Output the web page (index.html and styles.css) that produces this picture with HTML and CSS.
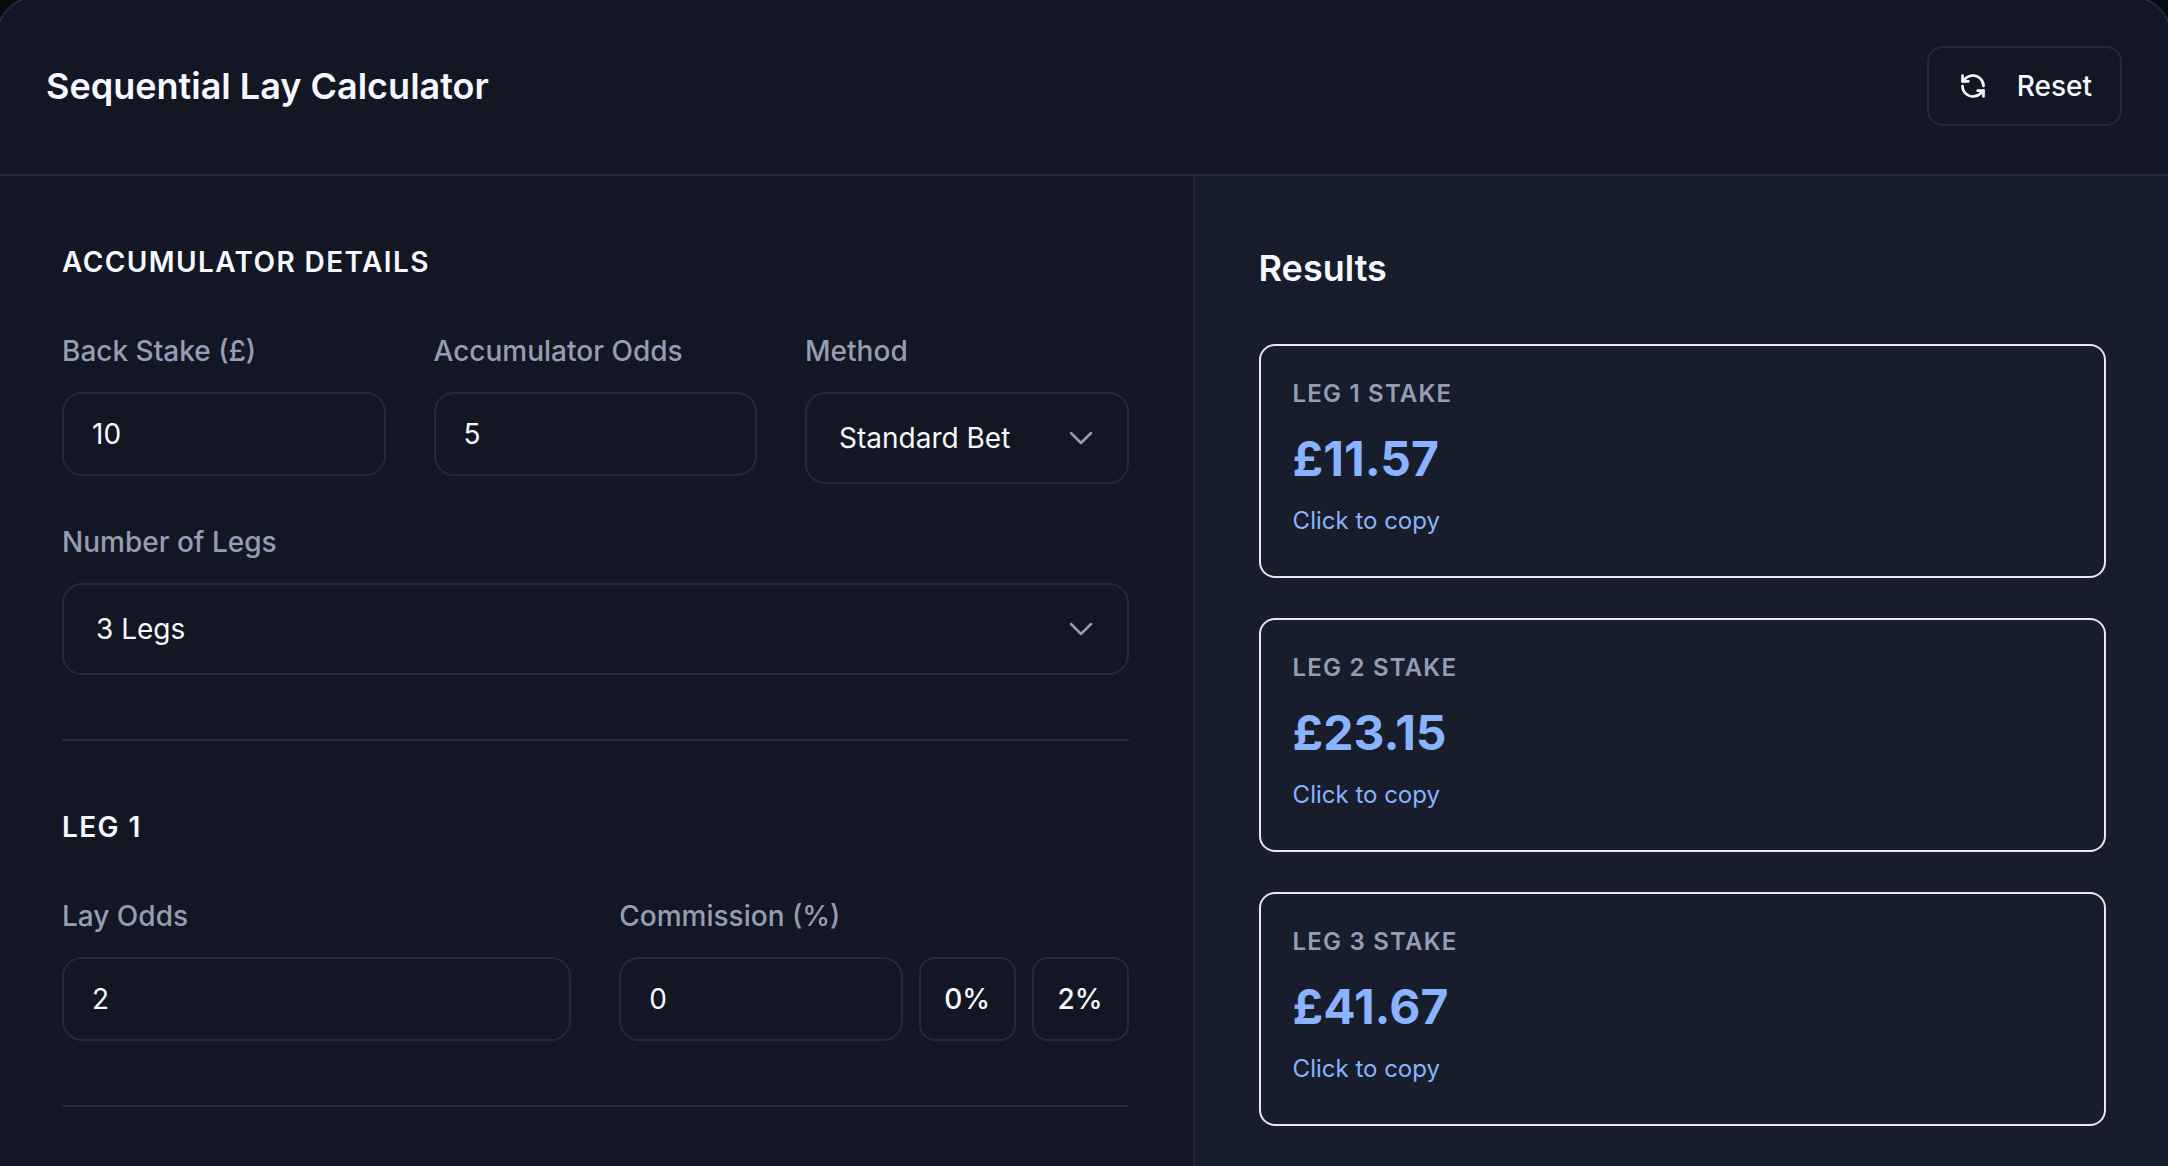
FILE: index.html
```html
<!DOCTYPE html>
<html lang="en">
<head>
<meta charset="utf-8">
<meta name="viewport" content="width=device-width, initial-scale=1">
<title>Sequential Lay Calculator</title>
<link rel="stylesheet" href="styles.css">
</head>
<body>
<main class="calculator">
  <header class="calculator-header">
    <h1 class="title">Sequential Lay Calculator</h1>
    <button class="reset" type="button">
      <svg class="reset-icon" viewBox="0 0 24 24" aria-hidden="true">
        <path d="M21 12a9 9 0 0 0-9-9 9.75 9.75 0 0 0-6.74 2.74L3 8"/>
        <path d="M3 3v5h5"/>
        <path d="M3 12a9 9 0 0 0 9 9 9.75 9.75 0 0 0 6.74-2.74L21 16"/>
        <path d="M16 16h5v5"/>
      </svg>
      Reset
    </button>
  </header>

  <div class="columns">
    <form class="details">
      <section class="section">
        <h2 class="section-title">Accumulator Details</h2>
        <div class="fields fields-three">
          <div class="field">
            <label class="label" for="stake">Back Stake (£)</label>
            <input class="input" id="stake" type="text" inputmode="decimal" value="10">
          </div>
          <div class="field">
            <label class="label" for="odds">Accumulator Odds</label>
            <input class="input" id="odds" type="text" inputmode="decimal" value="5">
          </div>
          <div class="field">
            <label class="label" for="method">Method</label>
            <div class="select-wrap">
              <select class="select" id="method"><option>Standard Bet</option></select>
              <svg class="chevron" viewBox="0 0 24 24" aria-hidden="true"><path d="M6 9l6 6 6-6"/></svg>
            </div>
          </div>
        </div>
        <div class="field">
          <label class="label" for="legs">Number of Legs</label>
          <div class="select-wrap">
            <select class="select" id="legs"><option>3 Legs</option></select>
            <svg class="chevron" viewBox="0 0 24 24" aria-hidden="true"><path d="M6 9l6 6 6-6"/></svg>
          </div>
        </div>
      </section>

      <section class="section">
        <h2 class="section-title">Leg 1</h2>
        <div class="fields fields-two">
          <div class="field">
            <label class="label" for="lay-odds">Lay Odds</label>
            <input class="input" id="lay-odds" type="text" inputmode="decimal" value="2">
          </div>
          <div class="field">
            <label class="label" for="commission">Commission (%)</label>
            <div class="commission">
              <input class="input" id="commission" type="text" inputmode="decimal" value="0">
              <button class="preset" type="button">0%</button>
              <button class="preset" type="button">2%</button>
            </div>
          </div>
        </div>
      </section>
    </form>

    <section class="results">
      <h2 class="results-title">Results</h2>
      <button class="stake" type="button">
        <span class="stake-label">Leg 1 Stake</span>
        <span class="stake-value">£11.57</span>
        <span class="stake-hint">Click to copy</span>
      </button>
      <button class="stake" type="button">
        <span class="stake-label">Leg 2 Stake</span>
        <span class="stake-value">£23.15</span>
        <span class="stake-hint">Click to copy</span>
      </button>
      <button class="stake" type="button">
        <span class="stake-label">Leg 3 Stake</span>
        <span class="stake-value">£41.67</span>
        <span class="stake-hint">Click to copy</span>
      </button>
    </section>
  </div>
</main>
</body>
</html>
```
FILE: styles.css
```css
:root {
  --page: #0a0b0f;
  --panel: #131623;
  --results: #181d2c;
  --line: #23293c;
  --text: #f6f8ff;
  --muted: #949eb3;
  --accent: #8ab2ff;
  --outline: #e5e7eb;
}

* {
  box-sizing: border-box;
}

body {
  margin: 0;
  overflow: hidden;
  background: var(--page);
  color: var(--text);
  font-family: Inter, "Liberation Sans", sans-serif;
  font-size: 28px;
}

button,
input,
select {
  margin: 0;
  color: inherit;
  font: inherit;
}

h1,
h2 {
  margin: 0;
  font-weight: 600;
}

/* The panel's border sits just outside the window edge. */
.calculator {
  display: flex;
  flex-direction: column;
  min-height: calc(100vh + 16px);
  margin: -4px -4px 0;
  overflow: hidden;
  border: 2px solid var(--line);
  border-bottom: 0;
  border-radius: 40px 40px 0 0;
  background: var(--panel);
}

.calculator-header {
  display: flex;
  align-items: center;
  justify-content: space-between;
  padding: 48px;
  border-bottom: 2px solid var(--line);
}

.title {
  font-size: 36px;
  line-height: 56px;
}

.reset {
  display: flex;
  align-items: center;
  gap: 28px;
  height: 80px;
  padding: 0 28px;
  border: 2px solid var(--line);
  border-radius: 16px;
  background: transparent;
  font-weight: 500;
}

.reset-icon {
  width: 32px;
  height: 32px;
  padding: 2px;
  fill: none;
  stroke: currentColor;
  stroke-width: 2.3;
  stroke-linecap: round;
  stroke-linejoin: round;
}

.columns {
  display: grid;
  flex: 1;
  grid-template-columns: 55fr 45fr;
}

.details {
  padding: 0 64px;
}

.section {
  display: flex;
  flex-direction: column;
  gap: 40px;
  padding: 64px 0;
  border-bottom: 2px solid var(--line);
}

.section-title {
  margin-bottom: 8px;
  font-size: 28px;
  line-height: 45px;
  letter-spacing: 0.05em;
  text-transform: uppercase;
}

.fields {
  display: grid;
  align-items: start;
  gap: 48px;
}

.fields-three {
  grid-template-columns: repeat(3, minmax(0, 1fr));
}

.fields-two {
  grid-template-columns: repeat(2, minmax(0, 1fr));
}

.field {
  display: flex;
  flex-direction: column;
  gap: 22px;
}

.label {
  color: var(--muted);
  font-weight: 500;
  line-height: 37px;
}

.input {
  width: 100%;
  min-width: 0;
  height: 84px;
  padding: 0 28px;
  border: 2px solid var(--line);
  border-radius: 20px;
  background: transparent;
}

.select-wrap {
  display: grid;
  align-items: center;
}

.select,
.chevron {
  grid-area: 1 / 1;
}

.select {
  width: 100%;
  height: 92px;
  padding: 0 80px 0 32px;
  appearance: none;
  border: 2px solid var(--line);
  border-radius: 20px;
  background: var(--panel);
}

.chevron {
  justify-self: end;
  width: 40px;
  height: 40px;
  margin-right: 28px;
  pointer-events: none;
  fill: none;
  stroke: var(--muted);
  stroke-width: 1.5;
  stroke-linecap: round;
  stroke-linejoin: round;
}

.commission {
  display: flex;
  gap: 16px;
}

.commission .input {
  flex: 1;
}

.preset {
  flex: none;
  width: 97px;
  padding: 0;
  border: 2px solid var(--line);
  border-radius: 16px;
  background: transparent;
  font-weight: 500;
}

.results {
  display: flex;
  flex-direction: column;
  gap: 40px;
  padding: 64px;
  border-left: 2px solid var(--line);
  background: var(--results);
}

.results-title {
  margin-bottom: 8px;
  font-size: 36px;
  line-height: 56px;
}

.stake {
  display: flex;
  flex-direction: column;
  padding: 32px;
  border: 2px solid var(--outline);
  border-radius: 16px;
  background: transparent;
  color: var(--accent);
  font-size: 24px;
  text-align: left;
}

.stake-label {
  margin-bottom: 12px;
  color: var(--muted);
  font-weight: 600;
  line-height: 32px;
  letter-spacing: 0.05em;
  text-transform: uppercase;
}

.stake-value {
  margin-bottom: 2px;
  font-size: 48px;
  font-weight: 700;
  line-height: 74px;
}

.stake-hint {
  line-height: 46px;
}
```
